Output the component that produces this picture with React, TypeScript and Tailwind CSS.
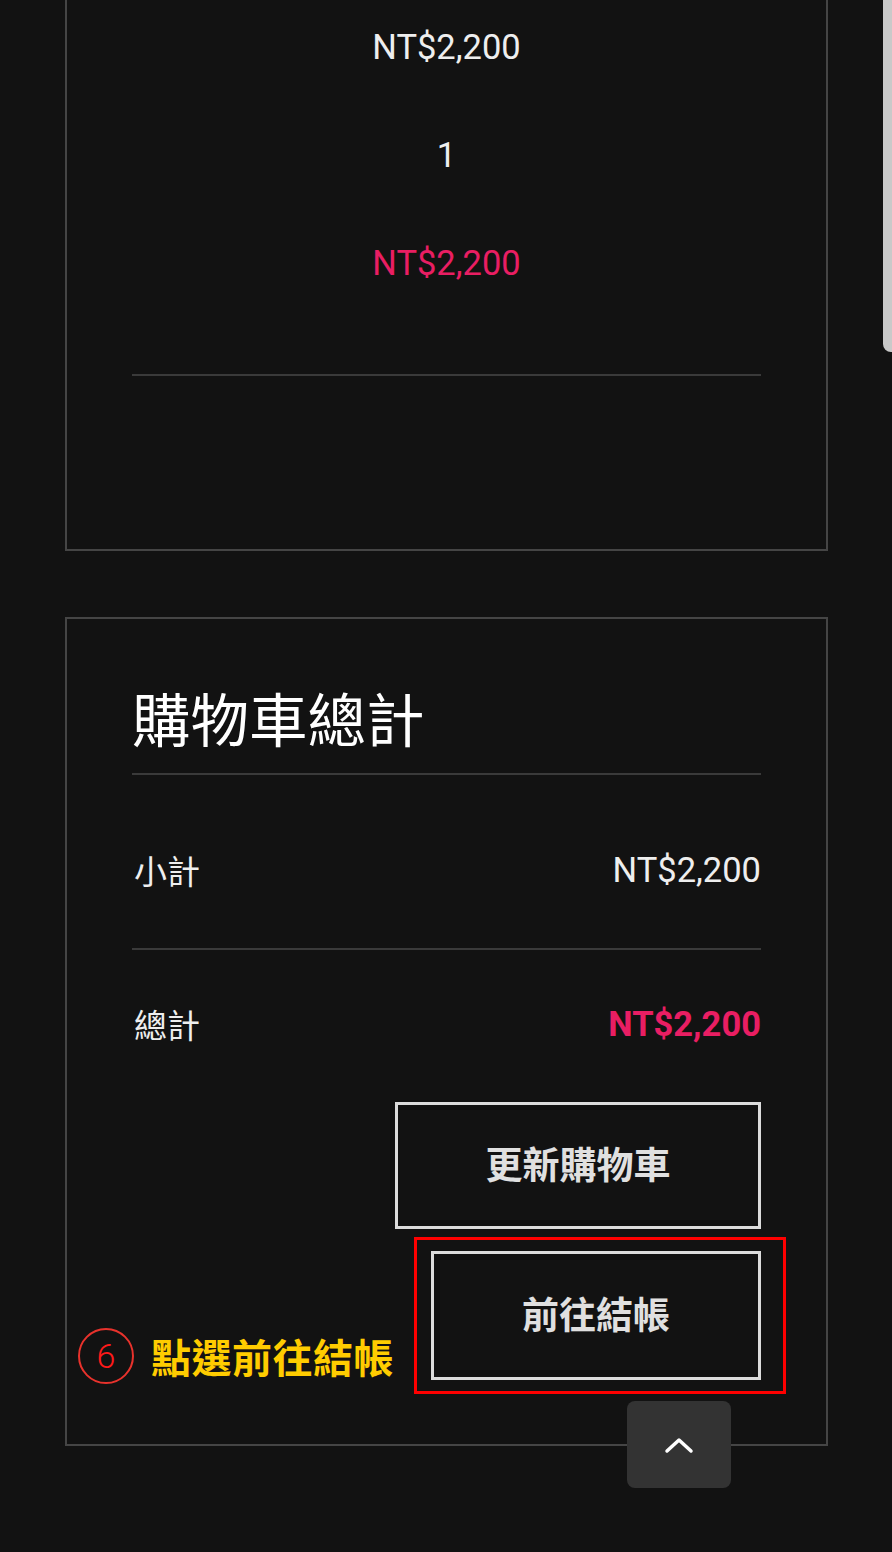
import React from 'react';

const num = { fontFamily: 'Roboto, "Noto Sans CJK TC", sans-serif' };
const cjk = { fontFamily: '"Noto Sans CJK TC", "Noto Sans", sans-serif' };

const Divider = () => <div className="h-[2px] bg-[#3a3a3a]" />;

const App = () => {
  return (
    <div className="relative w-[892px] h-[1552px] overflow-hidden bg-[#121212] text-[#eeeeee]">
      {/* scrollbar */}
      <div className="absolute right-0 top-0 w-[9px] h-[352px] bg-[#c9c9c9] rounded-bl-[8px]" />

      <div className="pl-[65px] w-[828px]">
        {/* cart item card (top cut off) */}
        <div className="border-x-2 border-b-2 border-[#454545] px-[65px] pt-[29px] pb-[173px]" style={num}>
          <div className="h-[36px] leading-[36px] text-[34.5px] text-center">NT$2,200</div>
          <div className="mt-[72px] h-[36px] leading-[36px] text-[34.5px] text-center">1</div>
          <div className="mt-[72px] h-[36px] leading-[36px] text-[34.5px] text-center text-[#e91e63]">NT$2,200</div>
          <div className="mt-[93px]">
            <Divider />
          </div>
        </div>

        {/* cart totals card */}
        <div className="mt-[66px] border-2 border-[#454545] px-[65px] pt-[64px] pb-[64px]">
          <h2 className="h-[68px] leading-[68px] text-[58.5px] font-normal text-white" style={cjk}>
            購物車總計
          </h2>
          <div className="mt-[22px]">
            <Divider />
          </div>

          <div className="mt-[76px] h-[40px] flex items-center justify-between">
            <span className="pl-[2px] text-[33px]" style={cjk}>小計</span>
            <span className="text-[34.5px]" style={num}>NT$2,200</span>
          </div>
          <div className="mt-[57px]">
            <Divider />
          </div>

          <div className="mt-[55px] h-[40px] flex items-center justify-between">
            <span className="pl-[2px] text-[33px]" style={cjk}>總計</span>
            <span className="text-[34.5px] font-bold text-[#e91e63]" style={num}>NT$2,200</span>
          </div>

          <div className="mt-[57px] flex justify-end">
            <button
              className="w-[366px] h-[127px] pb-[4px] border-[3px] border-[#dcdcdc] text-[37px] font-bold text-[#e0e0e0]"
              style={cjk}
            >
              更新購物車
            </button>
          </div>

          <div className="relative mt-[22px] flex justify-end">
            <button
              className="w-[330px] h-[129px] pb-[4px] border-[3px] border-[#dcdcdc] text-[37px] font-bold text-[#e0e0e0]"
              style={cjk}
            >
              前往結帳
            </button>

            {/* annotation */}
            <div className="absolute left-[-18px] right-[-25px] top-[-14px] bottom-[-14px] pointer-events-none">
              <div className="absolute right-0 top-0 w-[372px] h-[157px] border-[3px] border-[#ff0000]" />
              <div className="absolute left-[-36px] top-[89px] flex items-center gap-[17px]">
                <div className="w-[56px] h-[56px] rounded-full border-[2.5px] border-[#e8322c] flex items-center justify-center">
                  <span className="text-[34px] leading-none text-[#ff1a1a] font-light" style={num}>6</span>
                </div>
                <span className="text-[40px] font-bold text-[#ffcc00] tracking-[0.5px]" style={cjk}>
                  點選前往結帳
                </span>
              </div>
            </div>
          </div>
        </div>
      </div>

      {/* back to top */}
      <button className="absolute left-[627px] top-[1401px] w-[104px] h-[87px] rounded-[8px] bg-[#333333] flex items-center justify-center">
        <svg width="30" height="18" viewBox="0 0 30 18" fill="none">
          <path d="M3 15 L15 4 L27 15" stroke="#ffffff" strokeWidth="3.5" strokeLinecap="round" strokeLinejoin="round" />
        </svg>
      </button>
    </div>
  );
};

export default App;
